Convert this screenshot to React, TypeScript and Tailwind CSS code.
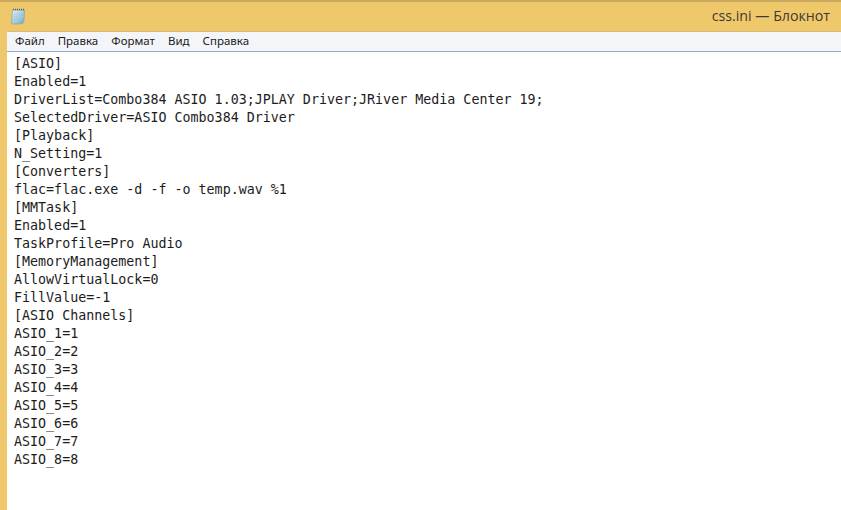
const lines = `[ASIO]
Enabled=1
DriverList=Combo384 ASIO 1.03;JPLAY Driver;JRiver Media Center 19;
SelectedDriver=ASIO Combo384 Driver
[Playback]
N_Setting=1
[Converters]
flac=flac.exe -d -f -o temp.wav %1
[MMTask]
Enabled=1
TaskProfile=Pro Audio
[MemoryManagement]
AllowVirtualLock=0
FillValue=-1
[ASIO Channels]
ASIO_1=1
ASIO_2=2
ASIO_3=3
ASIO_4=4
ASIO_5=5
ASIO_6=6
ASIO_7=7
ASIO_8=8`.split("\n");

const menu = ["Файл", "Правка", "Формат", "Вид", "Справка"];

function NotepadIcon() {
  return (
    <svg width="16" height="17" viewBox="0 0 16 17" className="shrink-0">
      <defs>
        <linearGradient id="pad" x1="0" y1="0" x2="1" y2="1">
          <stop offset="0" stopColor="#e6f4f8" />
          <stop offset="1" stopColor="#6fa9c4" />
        </linearGradient>
      </defs>
      <path d="M2.5 2 L14.5 2 L14 13 Q13.5 16 10.5 16 L1.5 16 Z" fill="url(#pad)" stroke="#8aa3a8" strokeWidth="0.7" />
      <path d="M3 1.5h11" stroke="#4f5f65" strokeWidth="1.4" strokeDasharray="1 1" />
      <path d="M4 6h9M4 8.5h9M3.5 11h9M3.5 13.5h6" stroke="#a9cddc" strokeWidth="0.8" />
    </svg>
  );
}

export default function App() {
  return (
    <div className="flex h-[510px] w-[841px] flex-col overflow-hidden border-t-2 border-[#c9a860] bg-[#f0c86c]">
      <div className="flex h-[29px] shrink-0 items-center justify-between pl-[10px] pr-[11px] pb-[1px]">
        <NotepadIcon />
        <span className="text-[14.2px] text-[#3d3a32] [font-family:'Open_Sans','Noto_Sans',sans-serif]">
          css.ini — Блокнот
        </span>
      </div>
      <div className="ml-[7px] flex min-h-0 flex-1 flex-col">
        <div className="flex h-[20px] shrink-0 items-center gap-[13px] border-t border-[#d8bb78] bg-[#f4f5f8] pb-[2px] pl-[8px] text-[11.5px] text-[#1a1a1a] [font-family:'Noto_Sans',sans-serif]">
          {menu.map((m) => (
            <span key={m}>{m}</span>
          ))}
        </div>
        <div className="h-[1px] shrink-0 bg-[#8fb0cc]" />
        <div className="flex-1 bg-white pl-[7px] pt-[3px] text-[13.33px] leading-[18px] text-[#1c1c1c] [font-family:'DejaVu_Sans_Mono',monospace]">
          {lines.map((l, i) => (
            <div key={i} className="whitespace-pre">
              {l}
            </div>
          ))}
        </div>
      </div>
    </div>
  );
}
